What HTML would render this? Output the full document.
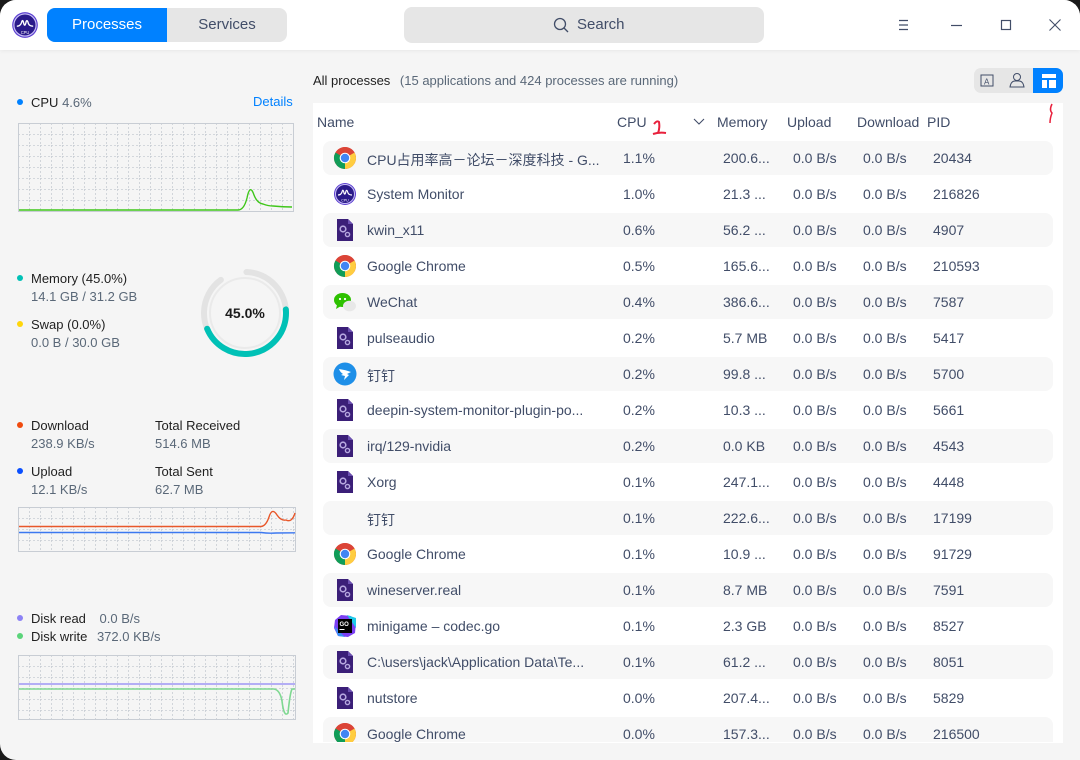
<!DOCTYPE html>
<html><head><meta charset="utf-8">
<style>
*{margin:0;padding:0;box-sizing:border-box}
body{width:1080px;height:760px;overflow:hidden;background:#1a1a1a;font-family:"Liberation Sans","Noto Sans CJK SC",sans-serif;position:relative}
#win{position:absolute;left:0;top:0;width:1080px;height:760px;background:#f5f5f5;border-radius:16px 16px 0 16px;overflow:hidden}
.a{position:absolute;white-space:nowrap}
#title{position:absolute;left:0;top:0;width:1080px;height:50px;background:#fff;box-shadow:0 1px 4px rgba(0,0,0,.06)}
.lbl{font-size:13px;color:#1f1f1f}
.val{font-size:13px;color:#5a6878}
.dot{position:absolute;width:6px;height:6px;border-radius:50%}
#panel{position:absolute;left:313px;top:103px;width:750px;height:640px;background:#fff}
.hd{position:absolute;top:114px;font-size:14px;color:#414d68;white-space:nowrap}
.row{position:absolute;left:323px;width:730px;height:34px;border-radius:8px}
.g{background:#f7f7f7}
.c{position:absolute;font-size:14px;color:#414d68;top:9px;white-space:nowrap}
.ic{position:absolute;left:10px;top:5px;width:24px;height:24px}
</style></head><body>
<svg width="0" height="0" style="position:absolute">
<defs>
<symbol id="chrome" viewBox="0 0 24 24">
<circle cx="12" cy="12" r="11" fill="#db4437"/>
<path d="M12 12 L12 23 A11 11 0 0 0 21.5 17.5 A11 11 0 0 0 23 12 A11 11 0 0 0 21.5 6.5 Z" fill="#ffcd40"/>
<path d="M12 12 L2.5 17.5 A11 11 0 0 0 12 23 Z" fill="#0f9d58"/>
<path d="M12 12 L2.5 17.5 A11 11 0 0 1 2.5 6.5 Z" fill="#0f9d58"/>
<path d="M12 12 L2.5 6.5 A11 11 0 0 1 21.5 6.5 Z" fill="#db4437"/>
<circle cx="12" cy="12" r="5.3" fill="#fff"/><circle cx="12" cy="12" r="4.2" fill="#4285f4"/>
</symbol>
<symbol id="gear" viewBox="0 0 24 24">
<path d="M4 1 H15 L20 6 V23 H4 Z" fill="#3b1f78"/><path d="M15 1 L20 6 H15 Z" fill="#6b4fb0"/>
<circle cx="10" cy="11" r="2.8" fill="none" stroke="#b7a8e0" stroke-width="1.6"/>
<circle cx="14.5" cy="16.5" r="2.1" fill="none" stroke="#b7a8e0" stroke-width="1.4"/>
</symbol>
<symbol id="mon" viewBox="0 0 24 24">
<circle cx="12" cy="12" r="11" fill="#5b3fd0"/><circle cx="12" cy="12" r="9.5" fill="#2a1a8a" stroke="#c9bff5" stroke-width="1"/>
<path d="M5 13 Q8 13 9 10 Q10 6 11 11 Q12 14 13 9 Q14 7 15 11 Q16 13 19 13" fill="none" stroke="#fff" stroke-width="1.2"/>
<text x="12" y="19.5" font-size="3.5" fill="#fff" text-anchor="middle" font-family="Liberation Sans">CPU</text>
</symbol>
<symbol id="wechat" viewBox="0 0 24 24">
<ellipse cx="9.5" cy="10" rx="8.5" ry="7" fill="#2dc100"/><path d="M4 15 L3 19 L8 16Z" fill="#2dc100"/>
<circle cx="7" cy="9" r="1.1" fill="#fff"/><circle cx="12" cy="9" r="1.1" fill="#fff"/>
<ellipse cx="16.5" cy="16" rx="6.5" ry="5.3" fill="#e8e8e8"/>
</symbol>
<symbol id="ding" viewBox="0 0 24 24">
<circle cx="12" cy="12" r="11.5" fill="#1e8fe8"/>
<path d="M6 7 Q13 8 18 10 L14 12 L16 13 L11 18 L12 14 L8 13 L10 12 Q7 10 6 7Z" fill="#fff"/>
</symbol>
<symbol id="go" viewBox="0 0 24 24">
<path d="M2 6 L8 1 L18 2 L23 9 L22 19 L15 23 L5 22 L1 14Z" fill="#7b3ff2"/>
<path d="M14 1 L23 4 L23 14 Z" fill="#1ec9e8"/><path d="M1 12 L5 22 L12 23 Z" fill="#3b8ef5"/>
<rect x="5" y="5" width="14" height="14" fill="#000"/>
<text x="6.5" y="12" font-size="6" font-weight="bold" fill="#fff" font-family="Liberation Sans">GO</text>
<rect x="6.5" y="15" width="5" height="1" fill="#fff"/>
</symbol>
<pattern id="grid" width="11" height="11" patternUnits="userSpaceOnUse">
<path d="M0 0.5 H11 M0.5 0 V11" stroke="#c8cdd4" stroke-width="0.8" stroke-dasharray="2 2" fill="none"/>
</pattern>
</defs></svg>
<div id="win">
<div id="title">
<svg class="a" style="left:11px;top:11px" width="28" height="28"><use href="#mon"/></svg>
<div class="a" style="left:47px;top:8px;width:240px;height:34px;border-radius:8px;background:#e6e6e6"></div>
<div class="a" style="left:47px;top:8px;width:120px;height:34px;border-radius:8px 0 0 8px;background:#0081ff;color:#fff;font-size:15px;text-align:center;line-height:34px">Processes</div>
<div class="a" style="left:167px;top:8px;width:120px;height:34px;color:#414d68;font-size:15px;text-align:center;line-height:34px">Services</div>
<div class="a" style="left:404px;top:7px;width:360px;height:36px;border-radius:8px;background:#e6e6e6"></div>
<svg class="a" style="left:552px;top:16px" width="18" height="18"><circle cx="8" cy="8" r="5.5" fill="none" stroke="#414d68" stroke-width="1.3"/><path d="M12 12 L16 16" stroke="#414d68" stroke-width="1.3"/></svg>
<div class="a" style="left:577px;top:16px;font-size:15px;color:#414d68">Search</div>
<svg class="a" style="left:896px;top:17px" width="16" height="16"><path d="M3 3.5H12M3 8H12M3 12.5H12" stroke="#414d68" stroke-width="1.2"/></svg>
<svg class="a" style="left:948px;top:17px" width="16" height="16"><path d="M3 8.5H14" stroke="#414d68" stroke-width="1.2"/></svg>
<svg class="a" style="left:998px;top:17px" width="16" height="16"><rect x="3.5" y="3.5" width="9" height="9" fill="none" stroke="#414d68" stroke-width="1.2"/></svg>
<svg class="a" style="left:1047px;top:17px" width="16" height="16"><path d="M2.5 2.5L13.5 13.5M13.5 2.5L2.5 13.5" stroke="#414d68" stroke-width="1.1"/></svg>
</div>

<div class="dot" style="left:17px;top:99px;background:#0081ff"></div>
<div class="a lbl" style="left:31px;top:95px">CPU <span class="val">4.6%</span></div>
<div class="a" style="left:253px;top:94px;font-size:13px;color:#0081ff">Details</div>
<svg class="a" style="left:18px;top:123px" width="276" height="90">
<rect x="0.5" y="0.5" width="275" height="88" fill="url(#grid)" stroke="#c8cdd4"/>
<path d="M1 87 L220 87 Q226 87 229 75 Q232 60 236 72 Q239 80 245 81 Q250 83 255 83 Q265 84 274 84" fill="none" stroke="#3fc61a" stroke-width="1.4"/>
</svg>

<div class="dot" style="left:17px;top:275px;background:#00c1b6"></div>
<div class="a lbl" style="left:31px;top:271px">Memory (45.0%)</div>
<div class="a val" style="left:31px;top:289px">14.1 GB / 31.2 GB</div>
<div class="dot" style="left:17px;top:321px;background:#ffd60a"></div>
<div class="a lbl" style="left:31px;top:317px">Swap (0.0%)</div>
<div class="a val" style="left:31px;top:335px">0.0 B / 30.0 GB</div>
<svg class="a" style="left:195px;top:263px" width="100" height="100">
<circle cx="50" cy="50" r="41" fill="none" stroke="#e3e3e3" stroke-width="6" stroke-dasharray="230 300" stroke-linecap="round" transform="rotate(-88 50 50)"/>
<circle cx="50" cy="50" r="35" fill="none" stroke="#eaeaea" stroke-width="2"/>
<circle cx="50" cy="50" r="41" fill="none" stroke="#00c1b6" stroke-width="6" stroke-dasharray="116 300" stroke-linecap="round" transform="rotate(-5 50 50)"/>
<text x="50" y="55" font-size="14" font-weight="bold" fill="#1a1a1a" text-anchor="middle" font-family="Liberation Sans">45.0%</text>
</svg>

<div class="dot" style="left:17px;top:422px;background:#f04a0e"></div>
<div class="a lbl" style="left:31px;top:418px">Download</div>
<div class="a val" style="left:31px;top:436px">238.9 KB/s</div>
<div class="a lbl" style="left:155px;top:418px">Total Received</div>
<div class="a val" style="left:155px;top:436px">514.6 MB</div>
<div class="dot" style="left:17px;top:468px;background:#0a4fff"></div>
<div class="a lbl" style="left:31px;top:464px">Upload</div>
<div class="a val" style="left:31px;top:482px">12.1 KB/s</div>
<div class="a lbl" style="left:155px;top:464px">Total Sent</div>
<div class="a val" style="left:155px;top:482px">62.7 MB</div>
<svg class="a" style="left:18px;top:507px" width="280" height="46">
<rect x="0.5" y="0.5" width="277" height="44" fill="url(#grid)" stroke="#c8cdd4"/>
<path d="M1 19.5 L243 19.5 Q248 19 251 10 Q254 0 259 8 Q263 14 268 13 Q274 16 277 6" fill="none" stroke="#e8572a" stroke-width="1.4"/>
<path d="M1 25.5 L243 25.5 Q250 26.5 258 26 L277 25.8" fill="none" stroke="#3c78f0" stroke-width="1.4"/>
</svg>

<div class="dot" style="left:17px;top:615px;background:#8c82f5"></div>
<div class="a lbl" style="left:31px;top:611px">Disk read <span class="val" style="margin-left:10px">0.0 B/s</span></div>
<div class="dot" style="left:17px;top:633px;background:#5bd47a"></div>
<div class="a lbl" style="left:31px;top:629px">Disk write <span class="val" style="margin-left:6px">372.0 KB/s</span></div>
<svg class="a" style="left:18px;top:655px" width="280" height="66">
<rect x="0.5" y="0.5" width="277" height="64" fill="url(#grid)" stroke="#c8cdd4"/>
<path d="M1 29 L277 29" stroke="#9e96f5" stroke-width="1.6"/>
<path d="M1 34 L256 34 Q262 35 264 46 Q266 63 270 58 Q272 38 274 34 L277 34" fill="none" stroke="#7ed891" stroke-width="1.6"/>
</svg>

<div class="a" style="left:313px;top:73px;font-size:13px;color:#1f1f1f">All processes <span style="color:#5a6878;margin-left:6px">(15 applications and 424 processes are running)</span></div>
<div class="a" style="left:974px;top:68px;width:89px;height:25px;border-radius:7px;background:#e6e6e6"></div>
<div class="a" style="left:1033px;top:68px;width:30px;height:25px;border-radius:0 7px 7px 0;background:#0081ff"></div>
<svg class="a" style="left:979px;top:72px" width="18" height="18"><rect x="2" y="3" width="12" height="11" fill="none" stroke="#414d68"/><text x="5" y="12.5" font-size="8" fill="#414d68" font-family="Liberation Sans">A</text></svg>
<svg class="a" style="left:1008px;top:71px" width="18" height="18"><circle cx="9" cy="6" r="3.5" fill="none" stroke="#414d68"/><path d="M2 16 Q3 10 7 10 H11 Q15 10 16 16 Z" fill="none" stroke="#414d68"/></svg>
<svg class="a" style="left:1040px;top:72px" width="18" height="18"><rect x="2" y="2" width="14" height="4" fill="#fff"/><rect x="2" y="8" width="5" height="8" fill="#fff"/><rect x="9" y="8" width="7" height="8" fill="#fff"/></svg>

<div id="panel"></div>
<svg class="a" style="left:1046px;top:102px" width="10" height="24"><path d="M6 2 Q3 8 6 11 Q4 16 4 21" fill="none" stroke="#e8203c" stroke-width="1.5"/></svg>
<div class="hd" style="left:317px">Name</div>
<div class="hd" style="left:617px">CPU</div>
<svg class="a" style="left:650px;top:118px" width="20" height="20"><path d="M4 6 Q7 2 9 4 Q10 10 8 15 M3 16 Q9 14 16 15" fill="none" stroke="#e8203c" stroke-width="2"/></svg>
<svg class="a" style="left:692px;top:116px" width="14" height="12"><path d="M2 3 L7 8 L12 3" fill="none" stroke="#414d68" stroke-width="1.1"/></svg>
<div class="hd" style="left:717px">Memory</div>
<div class="hd" style="left:787px">Upload</div>
<div class="hd" style="left:857px;width:63px;overflow:hidden">Download</div>
<div class="hd" style="left:927px">PID</div>

<div id="rows" style="position:absolute;left:0;top:0;width:1080px;height:742px;overflow:hidden">
<div class="row g" style="top:141px"><svg class="ic"><use href="#chrome"/></svg><div class="c" style="left:44px">CPU占用率高－论坛－深度科技 - G...</div><div class="c" style="left:300px">1.1%</div><div class="c" style="left:400px">200.6...</div><div class="c" style="left:470px">0.0 B/s</div><div class="c" style="left:540px">0.0 B/s</div><div class="c" style="left:610px">20434</div></div>
<div class="row" style="top:177px"><svg class="ic"><use href="#mon"/></svg><div class="c" style="left:44px">System Monitor</div><div class="c" style="left:300px">1.0%</div><div class="c" style="left:400px">21.3 ...</div><div class="c" style="left:470px">0.0 B/s</div><div class="c" style="left:540px">0.0 B/s</div><div class="c" style="left:610px">216826</div></div>
<div class="row g" style="top:213px"><svg class="ic"><use href="#gear"/></svg><div class="c" style="left:44px">kwin_x11</div><div class="c" style="left:300px">0.6%</div><div class="c" style="left:400px">56.2 ...</div><div class="c" style="left:470px">0.0 B/s</div><div class="c" style="left:540px">0.0 B/s</div><div class="c" style="left:610px">4907</div></div>
<div class="row" style="top:249px"><svg class="ic"><use href="#chrome"/></svg><div class="c" style="left:44px">Google Chrome</div><div class="c" style="left:300px">0.5%</div><div class="c" style="left:400px">165.6...</div><div class="c" style="left:470px">0.0 B/s</div><div class="c" style="left:540px">0.0 B/s</div><div class="c" style="left:610px">210593</div></div>
<div class="row g" style="top:285px"><svg class="ic"><use href="#wechat"/></svg><div class="c" style="left:44px">WeChat</div><div class="c" style="left:300px">0.4%</div><div class="c" style="left:400px">386.6...</div><div class="c" style="left:470px">0.0 B/s</div><div class="c" style="left:540px">0.0 B/s</div><div class="c" style="left:610px">7587</div></div>
<div class="row" style="top:321px"><svg class="ic"><use href="#gear"/></svg><div class="c" style="left:44px">pulseaudio</div><div class="c" style="left:300px">0.2%</div><div class="c" style="left:400px">5.7 MB</div><div class="c" style="left:470px">0.0 B/s</div><div class="c" style="left:540px">0.0 B/s</div><div class="c" style="left:610px">5417</div></div>
<div class="row g" style="top:357px"><svg class="ic"><use href="#ding"/></svg><div class="c" style="left:44px">钉钉</div><div class="c" style="left:300px">0.2%</div><div class="c" style="left:400px">99.8 ...</div><div class="c" style="left:470px">0.0 B/s</div><div class="c" style="left:540px">0.0 B/s</div><div class="c" style="left:610px">5700</div></div>
<div class="row" style="top:393px"><svg class="ic"><use href="#gear"/></svg><div class="c" style="left:44px">deepin-system-monitor-plugin-po...</div><div class="c" style="left:300px">0.2%</div><div class="c" style="left:400px">10.3 ...</div><div class="c" style="left:470px">0.0 B/s</div><div class="c" style="left:540px">0.0 B/s</div><div class="c" style="left:610px">5661</div></div>
<div class="row g" style="top:429px"><svg class="ic"><use href="#gear"/></svg><div class="c" style="left:44px">irq/129-nvidia</div><div class="c" style="left:300px">0.2%</div><div class="c" style="left:400px">0.0 KB</div><div class="c" style="left:470px">0.0 B/s</div><div class="c" style="left:540px">0.0 B/s</div><div class="c" style="left:610px">4543</div></div>
<div class="row" style="top:465px"><svg class="ic"><use href="#gear"/></svg><div class="c" style="left:44px">Xorg</div><div class="c" style="left:300px">0.1%</div><div class="c" style="left:400px">247.1...</div><div class="c" style="left:470px">0.0 B/s</div><div class="c" style="left:540px">0.0 B/s</div><div class="c" style="left:610px">4448</div></div>
<div class="row g" style="top:501px"><div class="c" style="left:44px">钉钉</div><div class="c" style="left:300px">0.1%</div><div class="c" style="left:400px">222.6...</div><div class="c" style="left:470px">0.0 B/s</div><div class="c" style="left:540px">0.0 B/s</div><div class="c" style="left:610px">17199</div></div>
<div class="row" style="top:537px"><svg class="ic"><use href="#chrome"/></svg><div class="c" style="left:44px">Google Chrome</div><div class="c" style="left:300px">0.1%</div><div class="c" style="left:400px">10.9 ...</div><div class="c" style="left:470px">0.0 B/s</div><div class="c" style="left:540px">0.0 B/s</div><div class="c" style="left:610px">91729</div></div>
<div class="row g" style="top:573px"><svg class="ic"><use href="#gear"/></svg><div class="c" style="left:44px">wineserver.real</div><div class="c" style="left:300px">0.1%</div><div class="c" style="left:400px">8.7 MB</div><div class="c" style="left:470px">0.0 B/s</div><div class="c" style="left:540px">0.0 B/s</div><div class="c" style="left:610px">7591</div></div>
<div class="row" style="top:609px"><svg class="ic"><use href="#go"/></svg><div class="c" style="left:44px">minigame – codec.go</div><div class="c" style="left:300px">0.1%</div><div class="c" style="left:400px">2.3 GB</div><div class="c" style="left:470px">0.0 B/s</div><div class="c" style="left:540px">0.0 B/s</div><div class="c" style="left:610px">8527</div></div>
<div class="row g" style="top:645px"><svg class="ic"><use href="#gear"/></svg><div class="c" style="left:44px">C:\users\jack\Application Data\Te...</div><div class="c" style="left:300px">0.1%</div><div class="c" style="left:400px">61.2 ...</div><div class="c" style="left:470px">0.0 B/s</div><div class="c" style="left:540px">0.0 B/s</div><div class="c" style="left:610px">8051</div></div>
<div class="row" style="top:681px"><svg class="ic"><use href="#gear"/></svg><div class="c" style="left:44px">nutstore</div><div class="c" style="left:300px">0.0%</div><div class="c" style="left:400px">207.4...</div><div class="c" style="left:470px">0.0 B/s</div><div class="c" style="left:540px">0.0 B/s</div><div class="c" style="left:610px">5829</div></div>
<div class="row g" style="top:717px"><svg class="ic"><use href="#chrome"/></svg><div class="c" style="left:44px">Google Chrome</div><div class="c" style="left:300px">0.0%</div><div class="c" style="left:400px">157.3...</div><div class="c" style="left:470px">0.0 B/s</div><div class="c" style="left:540px">0.0 B/s</div><div class="c" style="left:610px">216500</div></div>
</div>
</div>
</body></html>
